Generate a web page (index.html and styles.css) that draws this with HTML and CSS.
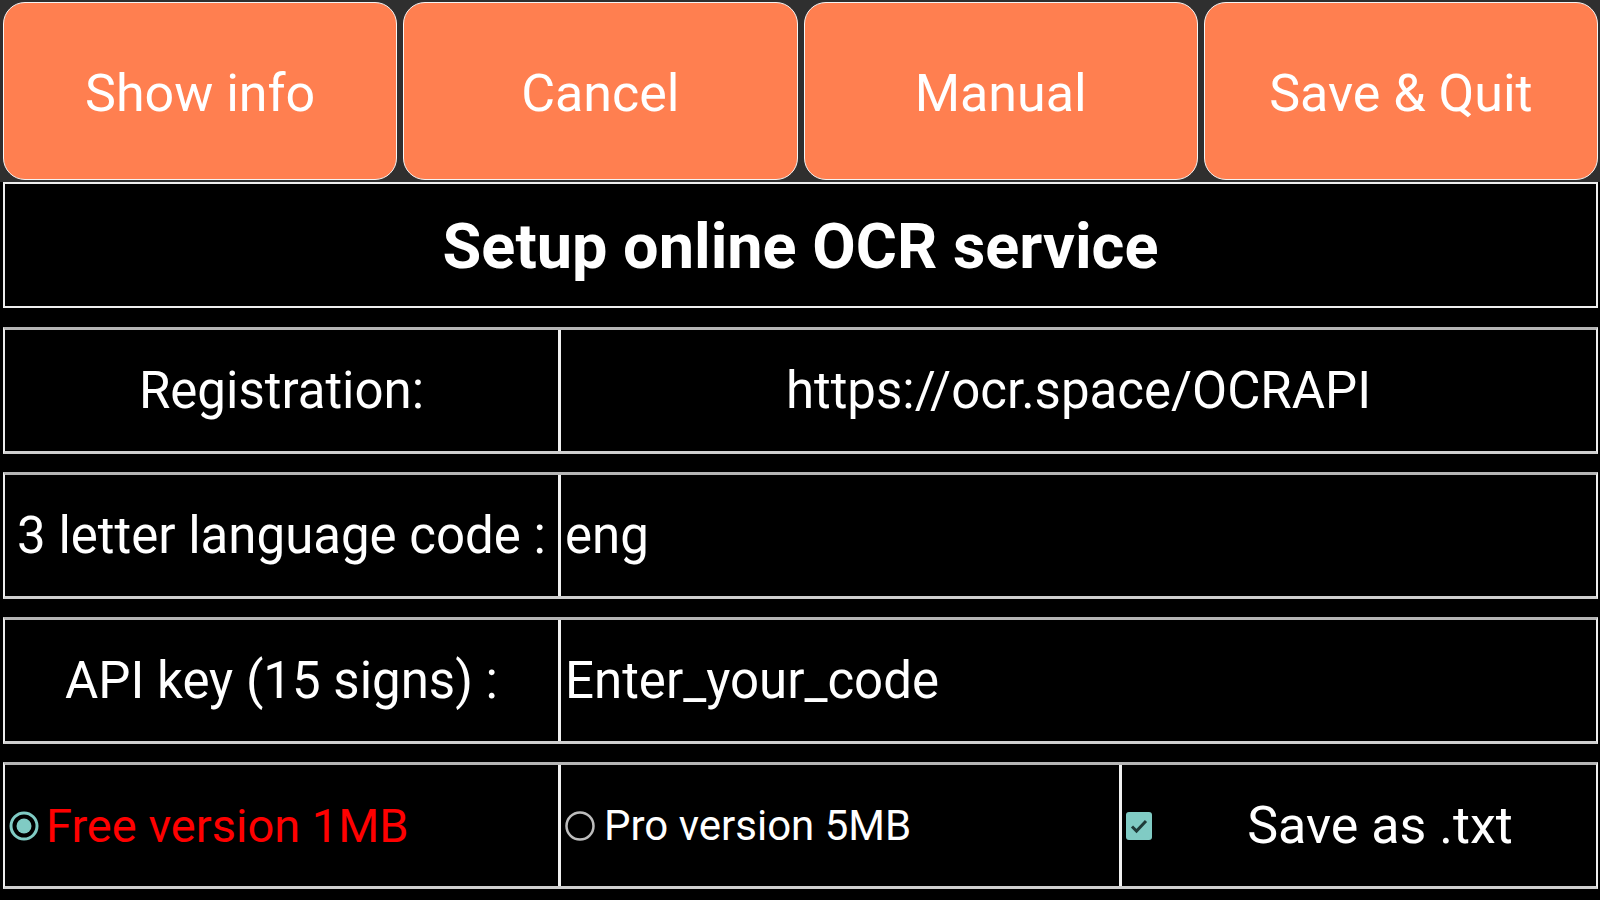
FILE: index.html
```html
<!DOCTYPE html>
<html lang="en">
<head>
<meta charset="utf-8">
<title>Setup online OCR service</title>
<link rel="stylesheet" href="styles.css">
</head>
<body>
<div class="toolbar">
  <button class="btn">Show info</button>
  <button class="btn">Cancel</button>
  <button class="btn">Manual</button>
  <button class="btn">Save &amp; Quit</button>
</div>
<div class="title">Setup online OCR service</div>
<div class="row two">
  <div class="cell center">Registration:</div>
  <div class="cell center divided">https://ocr.space/OCRAPI</div>
</div>
<div class="row two">
  <div class="cell center">3 letter language code :</div>
  <div class="cell left divided">eng</div>
</div>
<div class="row two">
  <div class="cell center">API key (15 signs) :</div>
  <div class="cell left divided">Enter_your_code</div>
</div>
<div class="row three">
  <div class="cell opt">
    <svg class="radio" viewBox="0 0 30 30" aria-hidden="true"><circle cx="15" cy="15" r="13" fill="none" stroke="#80cbc4" stroke-width="3"/><circle cx="15" cy="15" r="7.5" fill="#80cbc4"/></svg>
    <span class="free">Free version 1MB</span>
  </div>
  <div class="cell opt divided pro-cell">
    <svg class="radio" viewBox="0 0 30 30" aria-hidden="true"><circle cx="15" cy="15" r="13.5" fill="none" stroke="#bdbdbd" stroke-width="2.5"/></svg>
    <span class="pro">Pro version 5MB</span>
  </div>
  <div class="cell opt divided chk-cell">
    <svg class="check" viewBox="0 0 26 28" aria-hidden="true"><rect x="0" y="0" width="26" height="28" rx="3" fill="#80cbc4"/><path d="M6 14.5 L10.5 19 L20 9" fill="none" stroke="#1f3b39" stroke-width="3"/></svg>
    <span class="save">Save as .txt</span>
  </div>
</div>
</body>
</html>
```
FILE: styles.css
```css
html, body {
  margin: 0;
  padding: 0;
  background: #000;
  width: 1600px;
  height: 900px;
  overflow: hidden;
  font-family: Roboto, "Noto Sans", "Liberation Sans", sans-serif;
  color: #fff;
}

.toolbar {
  display: flex;
  gap: 6px;
  padding: 2px 2px 2px 3px;
  background: #2f2f2f;
  height: 178px;
}

.btn {
  flex: 1;
  margin: 0;
  background: #ff7f50;
  border: 1.5px solid #f4f4f4;
  border-radius: 22px;
  color: #fff;
  font-family: Roboto, "Noto Sans", "Liberation Sans", sans-serif;
  font-size: 52px;
  padding: 5px 0 0 0;
}

.title {
  margin: 0 2px 0 3px;
  border: 2px solid #eeeeee;
  box-sizing: border-box;
  height: 126px;
  display: flex;
  align-items: center;
  justify-content: center;
  font-weight: 700;
  font-size: 63px;
  padding-top: 2px;
}

.row {
  display: grid;
  margin: 18px 2px 0 3px;
  height: 127px;
  box-sizing: border-box;
  border-top: 3px solid #b5b5b5;
  border-bottom: 3px solid #cfcfcf;
  border-left: 2px solid #eeeeee;
  border-right: 2px solid #eeeeee;
}

.title + .row {
  margin-top: 19px;
}

.row.two {
  grid-template-columns: 553px 1fr;
}

.row.three {
  grid-template-columns: 553px 561px 1fr;
}

.cell {
  display: flex;
  align-items: center;
  font-size: 51px;
  white-space: nowrap;
  overflow: hidden;
  box-sizing: border-box;
}

.cell.divided {
  border-left: 3px solid #f0f0f0;
}

.cell.center {
  justify-content: center;
}

.cell.left {
  padding-left: 4px;
}

.cell.opt {
  padding-left: 4px;
}

.radio {
  width: 30px;
  height: 30px;
  flex: none;
  margin-right: 7px;
}

.pro-cell {
  padding-left: 9px;
}

.pro-cell .radio {
  margin-right: 9px;
}

.free {
  color: #ff0000;
  font-size: 47px;
}

.pro {
  font-size: 42px;
}

.chk-cell {
  padding-left: 16px;
}

.check {
  width: 26px;
  height: 28px;
  flex: none;
}

.save {
  flex: 1;
  text-align: center;
  font-size: 52px;
  padding-left: 12px;
}
```
